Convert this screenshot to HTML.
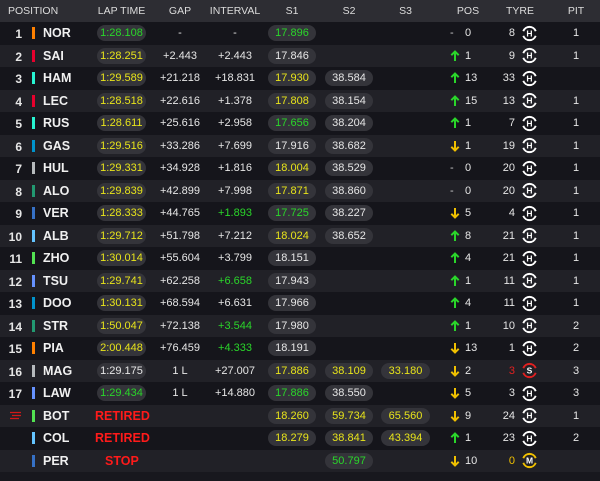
<!DOCTYPE html>
<html><head><meta charset="utf-8"><style>
*{margin:0;padding:0;box-sizing:border-box}
body{width:600px;height:481px;background:#18181e;font-family:"Liberation Sans",sans-serif;color:#e6e6e6;overflow:hidden;position:relative}
.h{position:absolute;left:0;top:0;width:600px;height:22px;background:#2d2d33;font-size:10.5px;color:#dcdcdc}
.h span{position:absolute;top:5px;text-align:center}
.r{position:absolute;left:0;width:600px;height:22.5px;font-size:11px}
.a{background:#15151b}.b{background:#212127}
.r>*{position:absolute}
.n{left:0;width:22px;text-align:right;top:5px;font-weight:bold;font-size:12px}
.bar{left:32px;top:5px;width:3px;height:12px}
.d{left:43px;top:4px;font-weight:bold;font-size:12.5px;color:#f0f0f0}
.p{height:16px;top:3px;border-radius:8px;background:#34343a;text-align:center;line-height:16px;font-size:11px}
.lt{left:97px;width:49px}.s1{left:268px;width:48px}.s2{left:325px;width:48px}.s3{left:381px;width:49px}
.g{left:150px;width:60px;text-align:center;top:5px}
.i{left:205px;width:60px;text-align:center;top:5px}
.ar{left:450px;top:5px;width:10px;height:12px}
.pn{left:465px;top:5px}
.ty{left:490px;width:25px;text-align:right;top:5px}
.ic{left:521px;top:2.5px;width:17px;height:17px}
.pit{left:566px;width:20px;text-align:center;top:5px}
.G{color:#2ad62a}.Y{color:#e8e41a}.W{color:#e6e6e6}.R{color:#e02020}
.ret{left:95px;top:4px;color:#ff1a1a;font-weight:bold;font-size:12.5px}
</style></head><body>
<svg width="0" height="0" style="position:absolute"><defs>
<path id="up" d="M5 11V1.5M1.3 5.2L5 1.5L8.7 5.2" fill="none" stroke="#2ad62a" stroke-width="2"/>
<path id="dn" d="M5 1V10.5M1.3 6.8L5 10.5L8.7 6.8" fill="none" stroke="#f0c000" stroke-width="2"/>
</defs></svg>
<div class="h"><span style="left:8px">POSITION</span><span style="left:97px;width:49px">LAP TIME</span><span style="left:150px;width:60px">GAP</span><span style="left:205px;width:60px">INTERVAL</span><span style="left:268px;width:48px">S1</span><span style="left:325px;width:48px">S2</span><span style="left:381px;width:49px">S3</span><span style="left:448px;width:40px">POS</span><span style="left:505px;width:30px">TYRE</span><span style="left:566px;width:20px">PIT</span></div>

<div class="r a" style="top:22px"><span class="n">1</span><i class="bar" style="background:#ff8000"></i><span class="d">NOR</span><span class="p lt G">1:28.108</span><span class="g">-</span><span class="i">-</span><span class="p s1 G">17.896</span><span class="ar" style="color:#ccc">-</span><span class="pn">0</span><span class="ty">8</span><svg class="ic" viewBox="0 0 17 17"><path d="M2.3 6.2A6.6 6.6 0 0 1 14.7 6.2M14.7 10.8A6.6 6.6 0 0 1 2.3 10.8" fill="none" stroke="#fff" stroke-width="1.9"/><text x="8.5" y="11.6" text-anchor="middle" font-size="8.5" font-weight="bold" fill="#fff" font-family="Liberation Sans">H</text></svg><span class="pit">1</span></div>
<div class="r b" style="top:44.5px"><span class="n">2</span><i class="bar" style="background:#e8002d"></i><span class="d">SAI</span><span class="p lt Y">1:28.251</span><span class="g">+2.443</span><span class="i">+2.443</span><span class="p s1 W">17.846</span><svg class="ar"><use href="#up"/></svg><span class="pn">1</span><span class="ty">9</span><svg class="ic" viewBox="0 0 17 17"><path d="M2.3 6.2A6.6 6.6 0 0 1 14.7 6.2M14.7 10.8A6.6 6.6 0 0 1 2.3 10.8" fill="none" stroke="#fff" stroke-width="1.9"/><text x="8.5" y="11.6" text-anchor="middle" font-size="8.5" font-weight="bold" fill="#fff" font-family="Liberation Sans">H</text></svg><span class="pit">1</span></div>
<div class="r a" style="top:67px"><span class="n">3</span><i class="bar" style="background:#27f4d2"></i><span class="d">HAM</span><span class="p lt Y">1:29.589</span><span class="g">+21.218</span><span class="i">+18.831</span><span class="p s1 Y">17.930</span><span class="p s2 W">38.584</span><svg class="ar"><use href="#up"/></svg><span class="pn">13</span><span class="ty">33</span><svg class="ic" viewBox="0 0 17 17"><path d="M2.3 6.2A6.6 6.6 0 0 1 14.7 6.2M14.7 10.8A6.6 6.6 0 0 1 2.3 10.8" fill="none" stroke="#fff" stroke-width="1.9"/><text x="8.5" y="11.6" text-anchor="middle" font-size="8.5" font-weight="bold" fill="#fff" font-family="Liberation Sans">H</text></svg></div>
<div class="r b" style="top:89.5px"><span class="n">4</span><i class="bar" style="background:#e8002d"></i><span class="d">LEC</span><span class="p lt Y">1:28.518</span><span class="g">+22.616</span><span class="i">+1.378</span><span class="p s1 Y">17.808</span><span class="p s2 W">38.154</span><svg class="ar"><use href="#up"/></svg><span class="pn">15</span><span class="ty">13</span><svg class="ic" viewBox="0 0 17 17"><path d="M2.3 6.2A6.6 6.6 0 0 1 14.7 6.2M14.7 10.8A6.6 6.6 0 0 1 2.3 10.8" fill="none" stroke="#fff" stroke-width="1.9"/><text x="8.5" y="11.6" text-anchor="middle" font-size="8.5" font-weight="bold" fill="#fff" font-family="Liberation Sans">H</text></svg><span class="pit">1</span></div>
<div class="r a" style="top:112px"><span class="n">5</span><i class="bar" style="background:#27f4d2"></i><span class="d">RUS</span><span class="p lt Y">1:28.611</span><span class="g">+25.616</span><span class="i">+2.958</span><span class="p s1 G">17.656</span><span class="p s2 W">38.204</span><svg class="ar"><use href="#up"/></svg><span class="pn">1</span><span class="ty">7</span><svg class="ic" viewBox="0 0 17 17"><path d="M2.3 6.2A6.6 6.6 0 0 1 14.7 6.2M14.7 10.8A6.6 6.6 0 0 1 2.3 10.8" fill="none" stroke="#fff" stroke-width="1.9"/><text x="8.5" y="11.6" text-anchor="middle" font-size="8.5" font-weight="bold" fill="#fff" font-family="Liberation Sans">H</text></svg><span class="pit">1</span></div>
<div class="r b" style="top:134.5px"><span class="n">6</span><i class="bar" style="background:#0093cc"></i><span class="d">GAS</span><span class="p lt Y">1:29.516</span><span class="g">+33.286</span><span class="i">+7.699</span><span class="p s1 W">17.916</span><span class="p s2 W">38.682</span><svg class="ar"><use href="#dn"/></svg><span class="pn">1</span><span class="ty">19</span><svg class="ic" viewBox="0 0 17 17"><path d="M2.3 6.2A6.6 6.6 0 0 1 14.7 6.2M14.7 10.8A6.6 6.6 0 0 1 2.3 10.8" fill="none" stroke="#fff" stroke-width="1.9"/><text x="8.5" y="11.6" text-anchor="middle" font-size="8.5" font-weight="bold" fill="#fff" font-family="Liberation Sans">H</text></svg><span class="pit">1</span></div>
<div class="r a" style="top:157px"><span class="n">7</span><i class="bar" style="background:#b6babd"></i><span class="d">HUL</span><span class="p lt Y">1:29.331</span><span class="g">+34.928</span><span class="i">+1.816</span><span class="p s1 Y">18.004</span><span class="p s2 W">38.529</span><span class="ar" style="color:#ccc">-</span><span class="pn">0</span><span class="ty">20</span><svg class="ic" viewBox="0 0 17 17"><path d="M2.3 6.2A6.6 6.6 0 0 1 14.7 6.2M14.7 10.8A6.6 6.6 0 0 1 2.3 10.8" fill="none" stroke="#fff" stroke-width="1.9"/><text x="8.5" y="11.6" text-anchor="middle" font-size="8.5" font-weight="bold" fill="#fff" font-family="Liberation Sans">H</text></svg><span class="pit">1</span></div>
<div class="r b" style="top:179.5px"><span class="n">8</span><i class="bar" style="background:#229971"></i><span class="d">ALO</span><span class="p lt Y">1:29.839</span><span class="g">+42.899</span><span class="i">+7.998</span><span class="p s1 Y">17.871</span><span class="p s2 W">38.860</span><span class="ar" style="color:#ccc">-</span><span class="pn">0</span><span class="ty">20</span><svg class="ic" viewBox="0 0 17 17"><path d="M2.3 6.2A6.6 6.6 0 0 1 14.7 6.2M14.7 10.8A6.6 6.6 0 0 1 2.3 10.8" fill="none" stroke="#fff" stroke-width="1.9"/><text x="8.5" y="11.6" text-anchor="middle" font-size="8.5" font-weight="bold" fill="#fff" font-family="Liberation Sans">H</text></svg><span class="pit">1</span></div>
<div class="r a" style="top:202px"><span class="n">9</span><i class="bar" style="background:#3671c6"></i><span class="d">VER</span><span class="p lt Y">1:28.333</span><span class="g">+44.765</span><span class="i G">+1.893</span><span class="p s1 G">17.725</span><span class="p s2 W">38.227</span><svg class="ar"><use href="#dn"/></svg><span class="pn">5</span><span class="ty">4</span><svg class="ic" viewBox="0 0 17 17"><path d="M2.3 6.2A6.6 6.6 0 0 1 14.7 6.2M14.7 10.8A6.6 6.6 0 0 1 2.3 10.8" fill="none" stroke="#fff" stroke-width="1.9"/><text x="8.5" y="11.6" text-anchor="middle" font-size="8.5" font-weight="bold" fill="#fff" font-family="Liberation Sans">H</text></svg><span class="pit">1</span></div>
<div class="r b" style="top:224.5px"><span class="n">10</span><i class="bar" style="background:#64c4ff"></i><span class="d">ALB</span><span class="p lt Y">1:29.712</span><span class="g">+51.798</span><span class="i">+7.212</span><span class="p s1 Y">18.024</span><span class="p s2 W">38.652</span><svg class="ar"><use href="#up"/></svg><span class="pn">8</span><span class="ty">21</span><svg class="ic" viewBox="0 0 17 17"><path d="M2.3 6.2A6.6 6.6 0 0 1 14.7 6.2M14.7 10.8A6.6 6.6 0 0 1 2.3 10.8" fill="none" stroke="#fff" stroke-width="1.9"/><text x="8.5" y="11.6" text-anchor="middle" font-size="8.5" font-weight="bold" fill="#fff" font-family="Liberation Sans">H</text></svg><span class="pit">1</span></div>
<div class="r a" style="top:247px"><span class="n">11</span><i class="bar" style="background:#52e252"></i><span class="d">ZHO</span><span class="p lt Y">1:30.014</span><span class="g">+55.604</span><span class="i">+3.799</span><span class="p s1 W">18.151</span><svg class="ar"><use href="#up"/></svg><span class="pn">4</span><span class="ty">21</span><svg class="ic" viewBox="0 0 17 17"><path d="M2.3 6.2A6.6 6.6 0 0 1 14.7 6.2M14.7 10.8A6.6 6.6 0 0 1 2.3 10.8" fill="none" stroke="#fff" stroke-width="1.9"/><text x="8.5" y="11.6" text-anchor="middle" font-size="8.5" font-weight="bold" fill="#fff" font-family="Liberation Sans">H</text></svg><span class="pit">1</span></div>
<div class="r b" style="top:269.5px"><span class="n">12</span><i class="bar" style="background:#6692ff"></i><span class="d">TSU</span><span class="p lt Y">1:29.741</span><span class="g">+62.258</span><span class="i G">+6.658</span><span class="p s1 W">17.943</span><svg class="ar"><use href="#up"/></svg><span class="pn">1</span><span class="ty">11</span><svg class="ic" viewBox="0 0 17 17"><path d="M2.3 6.2A6.6 6.6 0 0 1 14.7 6.2M14.7 10.8A6.6 6.6 0 0 1 2.3 10.8" fill="none" stroke="#fff" stroke-width="1.9"/><text x="8.5" y="11.6" text-anchor="middle" font-size="8.5" font-weight="bold" fill="#fff" font-family="Liberation Sans">H</text></svg><span class="pit">1</span></div>
<div class="r a" style="top:292px"><span class="n">13</span><i class="bar" style="background:#0093cc"></i><span class="d">DOO</span><span class="p lt Y">1:30.131</span><span class="g">+68.594</span><span class="i">+6.631</span><span class="p s1 W">17.966</span><svg class="ar"><use href="#up"/></svg><span class="pn">4</span><span class="ty">11</span><svg class="ic" viewBox="0 0 17 17"><path d="M2.3 6.2A6.6 6.6 0 0 1 14.7 6.2M14.7 10.8A6.6 6.6 0 0 1 2.3 10.8" fill="none" stroke="#fff" stroke-width="1.9"/><text x="8.5" y="11.6" text-anchor="middle" font-size="8.5" font-weight="bold" fill="#fff" font-family="Liberation Sans">H</text></svg><span class="pit">1</span></div>
<div class="r b" style="top:314.5px"><span class="n">14</span><i class="bar" style="background:#229971"></i><span class="d">STR</span><span class="p lt Y">1:50.047</span><span class="g">+72.138</span><span class="i G">+3.544</span><span class="p s1 W">17.980</span><svg class="ar"><use href="#up"/></svg><span class="pn">1</span><span class="ty">10</span><svg class="ic" viewBox="0 0 17 17"><path d="M2.3 6.2A6.6 6.6 0 0 1 14.7 6.2M14.7 10.8A6.6 6.6 0 0 1 2.3 10.8" fill="none" stroke="#fff" stroke-width="1.9"/><text x="8.5" y="11.6" text-anchor="middle" font-size="8.5" font-weight="bold" fill="#fff" font-family="Liberation Sans">H</text></svg><span class="pit">2</span></div>
<div class="r a" style="top:337px"><span class="n">15</span><i class="bar" style="background:#ff8000"></i><span class="d">PIA</span><span class="p lt Y">2:00.448</span><span class="g">+76.459</span><span class="i G">+4.333</span><span class="p s1 W">18.191</span><svg class="ar"><use href="#dn"/></svg><span class="pn">13</span><span class="ty">1</span><svg class="ic" viewBox="0 0 17 17"><path d="M2.3 6.2A6.6 6.6 0 0 1 14.7 6.2M14.7 10.8A6.6 6.6 0 0 1 2.3 10.8" fill="none" stroke="#fff" stroke-width="1.9"/><text x="8.5" y="11.6" text-anchor="middle" font-size="8.5" font-weight="bold" fill="#fff" font-family="Liberation Sans">H</text></svg><span class="pit">2</span></div>
<div class="r b" style="top:359.5px"><span class="n">16</span><i class="bar" style="background:#b6babd"></i><span class="d">MAG</span><span class="p lt W">1:29.175</span><span class="g">1 L</span><span class="i">+27.007</span><span class="p s1 Y">17.886</span><span class="p s2 Y">38.109</span><span class="p s3 Y">33.180</span><svg class="ar"><use href="#dn"/></svg><span class="pn">2</span><span class="ty R">3</span><svg class="ic" viewBox="0 0 17 17"><path d="M2.3 6.2A6.6 6.6 0 0 1 14.7 6.2M14.7 10.8A6.6 6.6 0 0 1 2.3 10.8" fill="none" stroke="#e02020" stroke-width="1.9"/><text x="8.5" y="11.6" text-anchor="middle" font-size="8.5" font-weight="bold" fill="#fff" font-family="Liberation Sans">S</text></svg><span class="pit">3</span></div>
<div class="r a" style="top:382px"><span class="n">17</span><i class="bar" style="background:#6692ff"></i><span class="d">LAW</span><span class="p lt G">1:29.434</span><span class="g">1 L</span><span class="i">+14.880</span><span class="p s1 G">17.886</span><span class="p s2 W">38.550</span><svg class="ar"><use href="#dn"/></svg><span class="pn">5</span><span class="ty">3</span><svg class="ic" viewBox="0 0 17 17"><path d="M2.3 6.2A6.6 6.6 0 0 1 14.7 6.2M14.7 10.8A6.6 6.6 0 0 1 2.3 10.8" fill="none" stroke="#fff" stroke-width="1.9"/><text x="8.5" y="11.6" text-anchor="middle" font-size="8.5" font-weight="bold" fill="#fff" font-family="Liberation Sans">H</text></svg><span class="pit">3</span></div>
<div class="r b" style="top:404.5px"><svg style="left:10px;top:6px" width="12" height="10"><path d="M0 1.5H11M2 4.5H11M0 7.5H9" stroke="#d01818" stroke-width="1.3"/></svg><i class="bar" style="background:#52e252"></i><span class="d">BOT</span><span class="ret">RETIRED</span><span class="p s1 Y">18.260</span><span class="p s2 Y">59.734</span><span class="p s3 Y">65.560</span><svg class="ar"><use href="#dn"/></svg><span class="pn">9</span><span class="ty">24</span><svg class="ic" viewBox="0 0 17 17"><path d="M2.3 6.2A6.6 6.6 0 0 1 14.7 6.2M14.7 10.8A6.6 6.6 0 0 1 2.3 10.8" fill="none" stroke="#fff" stroke-width="1.9"/><text x="8.5" y="11.6" text-anchor="middle" font-size="8.5" font-weight="bold" fill="#fff" font-family="Liberation Sans">H</text></svg><span class="pit">1</span></div>
<div class="r a" style="top:427px"><i class="bar" style="background:#64c4ff"></i><span class="d">COL</span><span class="ret">RETIRED</span><span class="p s1 Y">18.279</span><span class="p s2 Y">38.841</span><span class="p s3 Y">43.394</span><svg class="ar"><use href="#up"/></svg><span class="pn">1</span><span class="ty">23</span><svg class="ic" viewBox="0 0 17 17"><path d="M2.3 6.2A6.6 6.6 0 0 1 14.7 6.2M14.7 10.8A6.6 6.6 0 0 1 2.3 10.8" fill="none" stroke="#fff" stroke-width="1.9"/><text x="8.5" y="11.6" text-anchor="middle" font-size="8.5" font-weight="bold" fill="#fff" font-family="Liberation Sans">H</text></svg><span class="pit">2</span></div>
<div class="r b" style="top:449.5px"><i class="bar" style="background:#3671c6"></i><span class="d">PER</span><span class="ret" style="left:105px">STOP</span><span class="p s2 G">50.797</span><svg class="ar"><use href="#dn"/></svg><span class="pn">10</span><span class="ty" style="color:#f0c000">0</span><svg class="ic" viewBox="0 0 17 17"><path d="M2.3 6.2A6.6 6.6 0 0 1 14.7 6.2M14.7 10.8A6.6 6.6 0 0 1 2.3 10.8" fill="none" stroke="#f0c000" stroke-width="1.9"/><text x="8.5" y="11.6" text-anchor="middle" font-size="8.5" font-weight="bold" fill="#fff" font-family="Liberation Sans">M</text></svg></div>
</body></html>
